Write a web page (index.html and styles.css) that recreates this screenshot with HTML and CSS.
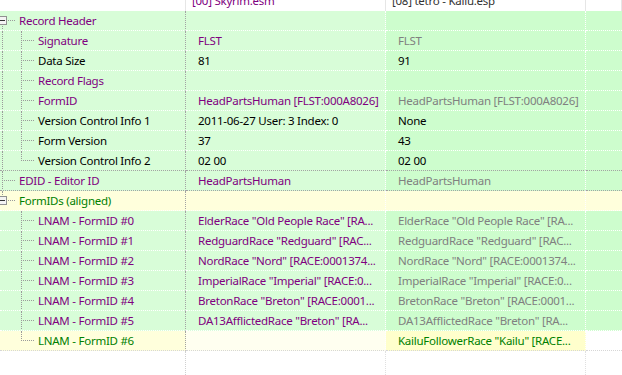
FILE: index.html
```html
<!DOCTYPE html>
<html>
<head>
	<meta charset="UTF-8">
	<title>Record View</title>
	<link rel="stylesheet" href="styles.css">
</head>
<body>
	<div class="view">
		<div class="row head">
			<div class="cell"></div>
			<div class="cell"><span class="file">[00] Skyrim.esm</span></div>
			<div class="cell"><span class="file2">[08] tetro - Kailu.esp</span></div>
			<div class="cell"></div>
		</div>

		<div class="row">
			<div class="cell tree"><span class="c first"><i class="box"></i></span><span class="t purple">Record Header</span></div>
			<div class="cell"></div>
			<div class="cell alt"></div>
			<div class="cell alt"></div>
		</div>
		<div class="row">
			<div class="cell tree"><span class="g"></span><span class="c"></span><span class="t purple">Signature</span></div>
			<div class="cell purple">FLST</div>
			<div class="cell alt gray">FLST</div>
			<div class="cell alt"></div>
		</div>
		<div class="row">
			<div class="cell tree"><span class="g"></span><span class="c"></span><span class="t">Data Size</span></div>
			<div class="cell">81</div>
			<div class="cell alt">91</div>
			<div class="cell alt"></div>
		</div>
		<div class="row">
			<div class="cell tree"><span class="g"></span><span class="c"></span><span class="t purple">Record Flags</span></div>
			<div class="cell"></div>
			<div class="cell alt"></div>
			<div class="cell alt"></div>
		</div>
		<div class="row">
			<div class="cell tree"><span class="g"></span><span class="c"></span><span class="t purple">FormID</span></div>
			<div class="cell purple">HeadPartsHuman [FLST:000A8026]</div>
			<div class="cell alt gray">HeadPartsHuman [FLST:000A8026]</div>
			<div class="cell alt"></div>
		</div>
		<div class="row">
			<div class="cell tree"><span class="g"></span><span class="c"></span><span class="t">Version Control Info 1</span></div>
			<div class="cell">2011-06-27 User: 3 Index: 0</div>
			<div class="cell alt">None</div>
			<div class="cell alt"></div>
		</div>
		<div class="row">
			<div class="cell tree"><span class="g"></span><span class="c"></span><span class="t">Form Version</span></div>
			<div class="cell">37</div>
			<div class="cell alt">43</div>
			<div class="cell alt"></div>
		</div>
		<div class="row sep">
			<div class="cell tree"><span class="g"></span><span class="c last"></span><span class="t">Version Control Info 2</span></div>
			<div class="cell">02 00</div>
			<div class="cell alt">02 00</div>
			<div class="cell alt"></div>
		</div>
		<div class="row sep">
			<div class="cell tree"><span class="c"></span><span class="t purple">EDID - Editor ID</span></div>
			<div class="cell purple">HeadPartsHuman</div>
			<div class="cell alt gray">HeadPartsHuman</div>
			<div class="cell alt"></div>
		</div>

		<div class="row yellow">
			<div class="cell tree"><span class="c last"><i class="box"></i></span><span class="t green">FormIDs (aligned)</span></div>
			<div class="cell"></div>
			<div class="cell"></div>
			<div class="cell"></div>
		</div>
		<div class="row">
			<div class="cell tree"><span class="g none"></span><span class="c"></span><span class="t purple">LNAM - FormID #0</span></div>
			<div class="cell purple">ElderRace "Old People Race" [RA...</div>
			<div class="cell alt gray">ElderRace "Old People Race" [RA...</div>
			<div class="cell alt"></div>
		</div>
		<div class="row">
			<div class="cell tree"><span class="g none"></span><span class="c"></span><span class="t purple">LNAM - FormID #1</span></div>
			<div class="cell purple">RedguardRace "Redguard" [RAC...</div>
			<div class="cell alt gray">RedguardRace "Redguard" [RAC...</div>
			<div class="cell alt"></div>
		</div>
		<div class="row">
			<div class="cell tree"><span class="g none"></span><span class="c"></span><span class="t purple">LNAM - FormID #2</span></div>
			<div class="cell purple">NordRace "Nord" [RACE:0001374...</div>
			<div class="cell alt gray">NordRace "Nord" [RACE:0001374...</div>
			<div class="cell alt"></div>
		</div>
		<div class="row">
			<div class="cell tree"><span class="g none"></span><span class="c"></span><span class="t purple">LNAM - FormID #3</span></div>
			<div class="cell purple">ImperialRace "Imperial" [RACE:0...</div>
			<div class="cell alt gray">ImperialRace "Imperial" [RACE:0...</div>
			<div class="cell alt"></div>
		</div>
		<div class="row">
			<div class="cell tree"><span class="g none"></span><span class="c"></span><span class="t purple">LNAM - FormID #4</span></div>
			<div class="cell purple">BretonRace "Breton" [RACE:0001...</div>
			<div class="cell alt gray">BretonRace "Breton" [RACE:0001...</div>
			<div class="cell alt"></div>
		</div>
		<div class="row">
			<div class="cell tree"><span class="g none"></span><span class="c"></span><span class="t purple">LNAM - FormID #5</span></div>
			<div class="cell purple">DA13AfflictedRace "Breton" [RA...</div>
			<div class="cell alt gray">DA13AfflictedRace "Breton" [RA...</div>
			<div class="cell alt"></div>
		</div>
		<div class="row yellow sep-light">
			<div class="cell tree"><span class="g none"></span><span class="c last"></span><span class="t green">LNAM - FormID #6</span></div>
			<div class="cell pale"></div>
			<div class="cell strong green">KailuFollowerRace "Kailu" [RACE...</div>
			<div class="cell white"></div>
		</div>

		<div class="row rest">
			<div class="cell"></div>
			<div class="cell"></div>
			<div class="cell"></div>
			<div class="cell"></div>
		</div>
	</div>
</body>
</html>
```

FILE: styles.css
```css
*{
	margin:0px;padding:0px;box-sizing:border-box;
}
html,body{
	height:375px;overflow:hidden;background:#fff;
}
body{
	font-family:"Segoe UI","Noto Sans","Open Sans",sans-serif;font-size:11.5px;letter-spacing:-0.25px;color:#000;
}
.view{
	display:flex;flex-direction:column;height:384px;margin-top:-9px;
}
.row{
	display:grid;grid-template-columns:186px 200px 200px 1fr;
	background-color:#d8fdd8;
}
.cell{
	height:20px;line-height:19px;padding-left:12px;white-space:nowrap;overflow:hidden;
	border-right:1px dotted #fff;border-bottom:1px dotted #fff;
}
.cell:first-child{
	border-right-color:#a3a3a3;
}
.cell:last-child{
	border-right:0;
}
.alt{
	background-color:#cdfdcd;
}

/* header */
.head{
	background-color:#fff;
}
.head .cell{
	border-bottom:0;padding-left:6px;line-height:20px;
	border-right:1px solid #e6e6e6;
}
.file{
	color:#800080;
}
.file2{
	color:#333;
}

/* tree column */
.tree{
	display:flex;padding-left:0;
}
.g,.c{
	position:relative;display:block;width:19px;flex:none;
}
.g:before,.c:before{
	content:"";position:absolute;left:2px;top:0;bottom:-1px;
	border-left:1px dotted #9a9a9a;
}
.g.none:before{
	display:none;
}
.c.last:before{
	bottom:auto;height:10px;
}
.c.first:before{
	top:10px;
}
.c:after{
	content:"";position:absolute;left:4px;top:9px;width:11px;
	border-top:1px dotted #9a9a9a;
}
.box{
	position:absolute;left:-2px;top:5px;width:9px;height:9px;z-index:1;
	border:1px solid #919191;background:#f4f4f4;
}
.box:after{
	content:"";position:absolute;left:1px;top:3px;width:5px;height:1px;background:#333;
}

/* text colours */
.purple{
	color:#800080;
}
.gray{
	color:#808080;
}
.green{
	color:#008000;
}

/* separators */
.sep .cell{
	border-bottom-color:#a3a3a3;
}
.sep-light .cell{
	border-bottom-color:#d6d6d6;
}

/* yellow rows */
.yellow,.yellow .cell{
	background-color:#ffffdc;
}
.yellow .pale{
	background-color:#fffff0;
}
.yellow .strong{
	background-color:#ffffcc;
}
.yellow .white{
	background-color:#fff;
}

/* empty area below */
.rest{
	flex:1;background:#fff;
}
.rest .cell{
	height:auto;border-bottom:0;border-right-color:#e0e0e0;
}
.rest .cell:first-child{
	border-right-color:#d0d0d0;
}
```
